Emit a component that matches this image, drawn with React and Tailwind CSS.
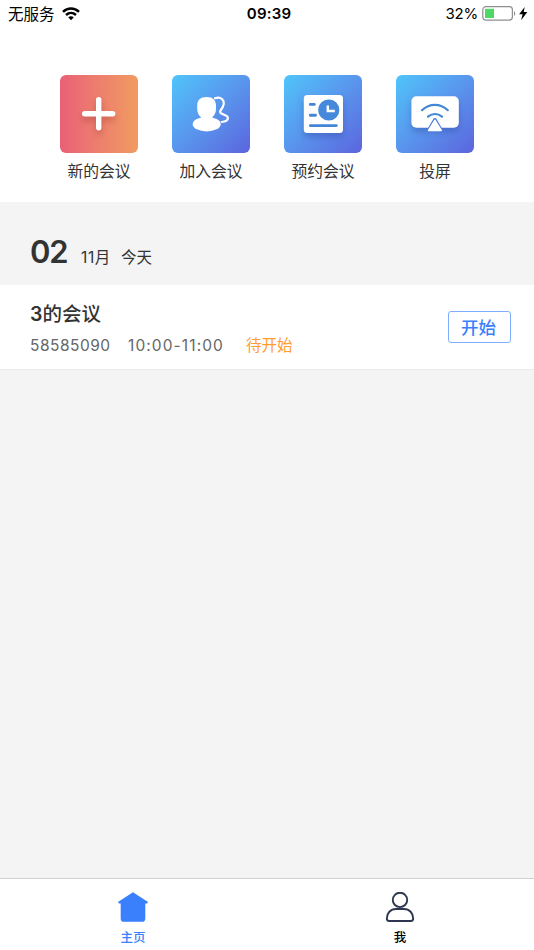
import React from 'react';

const NewMeetingIcon = () => (
  <svg viewBox="0 0 78 78" className="h-full w-full">
    <path d="M38.7 24.7v28M24.7 38.7h28" stroke="#fff" strokeWidth="5.4" strokeLinecap="round" className="drop-shadow-[0_4px_3px_rgba(150,50,50,0.4)]" />
  </svg>
);

const JoinIcon = () => (
  <svg viewBox="0 0 78 78" className="h-full w-full" fill="none">
    <ellipse cx="34.7" cy="49.2" rx="14" ry="7.200" fill="#fff" />
    <path d="M34.600 21.900c6.200 0 9.400 3.200 9.400 8.700v2.800c0 4.200-1.500 6.900-3.800 8.900v4H29v-4c-2.300-2-3.800-4.700-3.800-8.900v-2.800c0-5.500 3.200-8.700 9.400-8.700z" fill="#fff" />
    <path d="M43 23.300c4-1.500 7.300-.4 8.500 2.900.8 2.200.4 4-.9 6.200-1.300 2.100-2.900 3.300-2.400 5 .7 2.100 7.700 2.400 7.700 5.600 0 2.400-2.700 3.600-6.200 4" stroke="#fff" strokeWidth="2.200" strokeLinecap="round" />
  </svg>
);

const ScheduleIcon = () => (
  <svg viewBox="0 0 78 78" className="h-full w-full" fill="none">
    <rect x="19.8" y="20" width="39.2" height="38" rx="3.5" fill="#fff" className="drop-shadow-[0_4px_3px_rgba(40,60,150,0.35)]" />
    <circle cx="44.8" cy="35" r="10.6" fill="#4688dc" />
    <path d="M43.8 30.4v5.600h7" stroke="#fff" strokeWidth="2.4" />
    <path d="M26.300 29.400h4M26.300 40.200h5.200M26.300 50.600h26" stroke="#4385d6" strokeWidth="2.900" strokeLinecap="round" />
  </svg>
);

const CastIcon = () => (
  <svg viewBox="0 0 78 78" className="h-full w-full" fill="none">
    <rect x="15.4" y="21.300" width="47.400" height="31.500" rx="5" fill="#fff" className="drop-shadow-[0_4px_3px_rgba(40,60,150,0.35)]" />
    <path d="M26 35.200c7.600-7.200 18.200-7.200 25.800 0M32 41.700c4.200-3.600 9.800-3.600 14 0" stroke="#4388d6" strokeWidth="2.200" strokeLinecap="round" />
    <path d="M38.900 45l6.200 10.400h-12.400z" stroke="#4a80dc" strokeWidth="3.800" strokeLinejoin="round" />
    <path d="M38.900 45.400l6.200 10h-12.400z" fill="#fff" stroke="#fff" strokeWidth="1.700" strokeLinejoin="round" />
  </svg>
);

const WifiIcon = () => (
  <svg viewBox="0 0 18 14" className="h-[14px] w-[18px]" fill="none" stroke="#000" strokeWidth="2.500">
    <path d="M1 4.800c4.600-4.400 11.400-4.400 16 0M4 8c3-2.800 7-2.800 10 0" />
    <path d="M6.200 10.300c1.700-1.500 3.900-1.500 5.600 0L9 13.200z" fill="#000" stroke="none" />
  </svg>
);

const BatteryIcon = () => (
  <svg viewBox="0 0 46 16" className="h-4 w-[46px]" fill="none">
    <rect x="0.800" y="0.700" width="29.600" height="13.400" rx="3" stroke="#8e8e8e" strokeWidth="1.200" />
    <rect x="3" y="2.800" width="9" height="9.200" fill="#4cd964" />
    <path d="M32 5c1.600.8 1.600 4.200 0 5z" fill="#8e8e8e" />
    <path d="M42.700 1l-5.600 7.300h3.500l-1.500 5.900 6.200-8.200h-3.600z" fill="#000" />
  </svg>
);

const HomeIcon = () => (
  <svg viewBox="0 0 30 30" className="h-[30px] w-[30px]" fill="#3a7ffb">
    <path d="M15 0.200L29.300 9.400c1 .7.500 2.100-.6 2.100H27.300v15.200c0 1.900-1.200 3.100-3.100 3.100H5.800c-1.900 0-3.100-1.200-3.100-3.100V11.500H1.300c-1.100 0-1.600-1.400-.6-2.100z" />
  </svg>
);

const UserIcon = () => (
  <svg viewBox="0 0 30 30" className="h-[30px] w-[30px]" fill="none" stroke="#2f3650" strokeWidth="1.900">
    <circle cx="15" cy="7.900" r="7.200" />
    <path d="M11 17h8c5.500 0 9.200 4.100 9.200 9.600 0 1.600-.8 2.400-2.200 2.400H4c-1.400 0-2.200-.8-2.200-2.400C1.800 21.100 5.500 17 11 17z" />
  </svg>
);

const actions = [
  { label: '新的会议', Icon: NewMeetingIcon, bg: 'bg-linear-to-r from-[#e96076] to-[#f09b60]' },
  { label: '加入会议', Icon: JoinIcon, bg: 'bg-linear-to-br from-[#4fc4fa] to-[#5b64de]' },
  { label: '预约会议', Icon: ScheduleIcon, bg: 'bg-linear-to-br from-[#4fc4fa] to-[#5b64de]' },
  { label: '投屏', Icon: CastIcon, bg: 'bg-linear-to-br from-[#4fc4fa] to-[#5b64de]' },
];

const StatusBar = () => (
  <div className="grid h-7 grid-cols-3 items-center pr-1.5 pl-2 text-[15.500px] leading-[26px] text-black">
    <div className="-mt-px flex items-center gap-[7px]">
      <span className="pt-0.5">无服务</span>
      <WifiIcon />
    </div>
    <span className="pl-0.5 text-center text-[15px] font-semibold tracking-[0.200px]">09:39</span>
    <div className="-mt-px flex items-center justify-end gap-1">
      <span className="text-[15px] tracking-[-0.200px]">32%</span>
      <BatteryIcon />
    </div>
  </div>
);

const App = () => (
  <div className="flex h-[950px] w-[534px] flex-col overflow-hidden bg-[#f4f4f4] font-['Inter','Noto_Sans_CJK_SC',sans-serif] text-[#333]">
    <header className="h-[202px] bg-white">
      <StatusBar />
      <div className="flex justify-center gap-[34px] pt-[47px]">
        {actions.map(({ label, Icon, bg }) => (
          <div key={label} className="flex w-[78px] flex-col items-center">
            <div className={`h-[78px] w-[78px] overflow-hidden rounded-md ${bg}`}>
              <Icon />
            </div>
            <span className="mt-[7px] text-[15.800px] leading-6">{label}</span>
          </div>
        ))}
      </div>
    </header>

    <div className="flex h-[83px] items-baseline pt-[30px] pl-[30px] leading-10">
      <span className="w-[38px] text-[31px] font-semibold tracking-[-1.200px]">02</span>
      <span className="ml-[13px] w-[30px] text-[15.500px] tracking-[0.600px]">11月</span>
      <span className="ml-2.5 text-[15.500px]">今天</span>
    </div>

    <section className="flex h-[85px] items-center justify-between border-b border-[#ebebeb] bg-white pr-[23px] pl-[30px]">
      <div className="pt-1.5">
        <h2 className="text-[19.500px] leading-7 font-semibold"><span>3</span><span className="font-medium">的会议</span></h2>
        <div className="mt-1 flex text-[15.500px] leading-7 text-[#666]">
          <span className="w-[98px] tracking-[0.500px]">58585090</span>
          <span className="w-[118px] tracking-[1.100px]">10:00-11:00</span>
          <span className="text-[#ff9d2e]">待开始</span>
        </div>
      </div>
      <button className="h-8 w-[63px] rounded-[3px] border border-[#80aeff] pt-px pr-0.5 text-[17.500px] leading-[30px] font-medium text-[#3a7ffb]">开始</button>
    </section>

    <nav className="mt-auto grid h-[72px] grid-cols-2 border-t border-[#d0d0d0] bg-white text-[12.500px] leading-4 font-medium">
      <div className="flex flex-col items-center pt-[13px] pr-px text-[#3a7ffb]">
        <HomeIcon />
        <span className="mt-2">主页</span>
      </div>
      <div className="flex flex-col items-center pt-[13px] pr-px text-black">
        <UserIcon />
        <span className="mt-2">我</span>
      </div>
    </nav>
  </div>
);

export default App;
